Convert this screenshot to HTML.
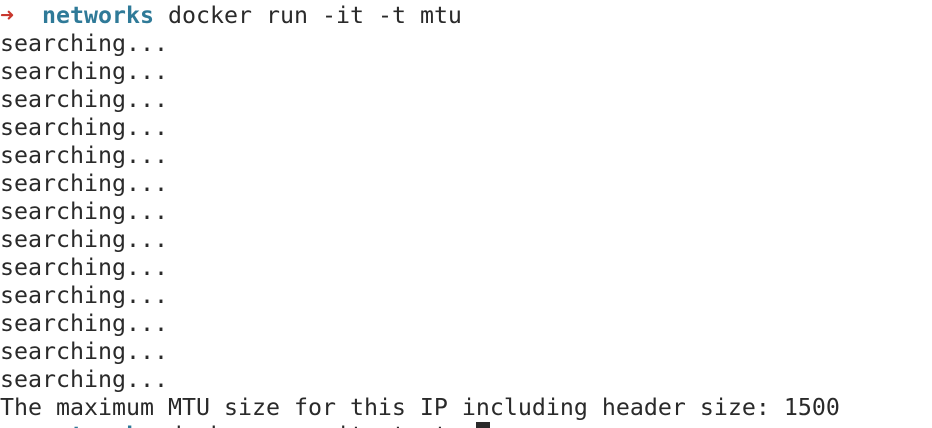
<!DOCTYPE html>
<html><head><style>
html,body{margin:0;padding:0;background:#fff;width:932px;height:428px;overflow:hidden}
#w{position:relative;width:932px;height:428px;overflow:hidden}
pre{margin:0;position:absolute;left:0;top:2px;font-family:"DejaVu Sans Mono","Liberation Mono",monospace;font-size:23.25px;line-height:28px;color:#2a2a2a}
.r{color:#c8372d}.b{color:#2f7a98;font-weight:bold}
.c{background:#2a2a2a;color:#2a2a2a}
</style></head><body><div id="w">
<pre><span class="r">➜</span>  <span class="b">networks</span> docker run -it -t mtu
searching...
searching...
searching...
searching...
searching...
searching...
searching...
searching...
searching...
searching...
searching...
searching...
searching...
The maximum MTU size for this IP including header size: 1500
<span class="r">➜</span>  <span class="b">networks</span> docker run -it -t mtu <span class="c"> </span></pre>
</div></body></html>
